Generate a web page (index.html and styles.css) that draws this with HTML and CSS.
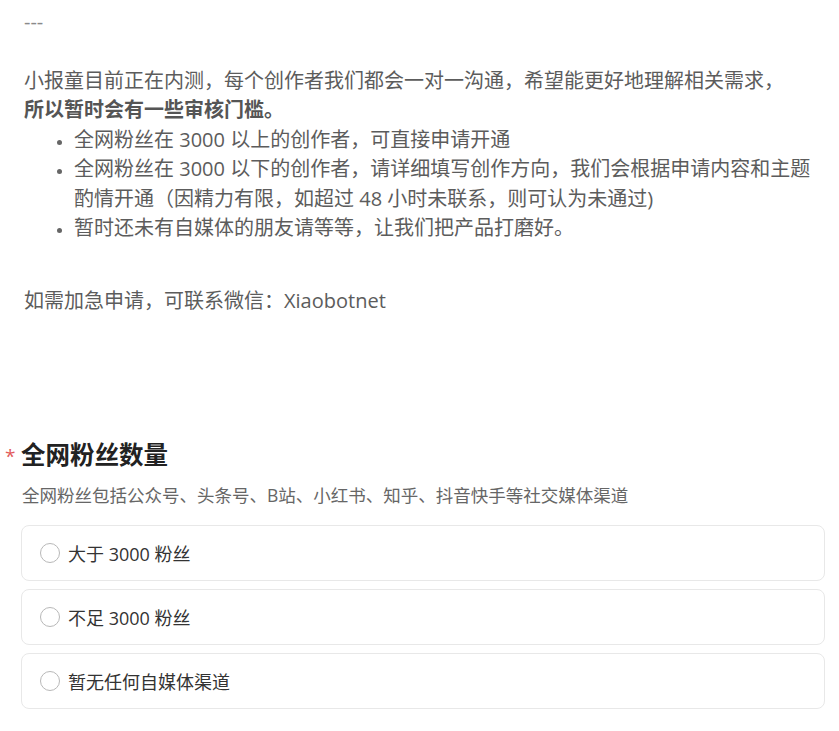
FILE: index.html
```html
<!DOCTYPE html>
<html lang="zh-CN">
<head>
<meta charset="utf-8">
<title>申请</title>
<link rel="stylesheet" href="styles.css">
</head>
<body>
<div class="page">
  <section class="intro">
    <p class="dash">---</p>
    <p class="lead">小报童目前正在内测，每个创作者我们都会一对一沟通，希望能更好地理解相关需求，<br><strong>所以暂时会有一些审核门槛。</strong></p>
    <ul class="rules">
      <li>全网粉丝在 3000 以上的创作者，可直接申请开通</li>
      <li>全网粉丝在 3000 以下的创作者，请详细填写创作方向，我们会根据申请内容和主题酌情开通（因精力有限，如超过 48 小时未联系，则可认为未通过)</li>
      <li>暂时还未有自媒体的朋友请等等，让我们把产品打磨好。</li>
    </ul>
    <p class="contact">如需加急申请，可联系微信：Xiaobotnet</p>
  </section>

  <section class="question">
    <h2 class="q-title"><span class="req">*</span>全网粉丝数量</h2>
    <p class="q-desc">全网粉丝包括公众号、头条号、B站、小红书、知乎、抖音快手等社交媒体渠道</p>
    <div class="options">
      <label class="option"><span class="radio"></span><span class="opt-text">大于 3000 粉丝</span></label>
      <label class="option"><span class="radio"></span><span class="opt-text">不足 3000 粉丝</span></label>
      <label class="option"><span class="radio"></span><span class="opt-text">暂无任何自媒体渠道</span></label>
    </div>
  </section>
</div>
</body>
</html>
```

FILE: styles.css
```css
html, body {
  margin: 0;
  padding: 0;
  background: #ffffff;
}

body {
  font-family: "Open Sans", "Noto Sans CJK SC", sans-serif;
  color: #5c5c5c;
}

.page {
  padding: 7px 13px 0 0;
}

.intro {
  padding-left: 24px;
  font-size: 20px;
  line-height: 29.5px;
}

.intro p {
  margin: 0;
}

.dash {
  color: #8a8a8a;
  margin-bottom: 29px !important;
}

.lead strong {
  font-weight: 700;
  color: #555555;
}

.rules {
  margin: 0;
  padding-left: 50px;
}

.rules li::marker {
  font-size: 15px;
  color: #666666;
}

.contact {
  margin-top: 43px !important;
}

.question {
  margin-top: 123px;
  padding-left: 21px;
}

.q-title {
  margin: 0;
  font-size: 24.5px;
  line-height: 34px;
  font-weight: 700;
  color: #222222;
  position: relative;
}

.req {
  position: absolute;
  left: -16px;
  top: 1px;
  color: #e25b5b;
  font-size: 19px;
  font-weight: 400;
}

.q-desc {
  margin: 10px 0 0 1px;
  font-size: 17.5px;
  line-height: 26px;
  color: #666666;
}

.options {
  margin-top: 17px;
  display: flex;
  flex-direction: column;
  gap: 8px;
  width: 804px;
}

.option {
  display: flex;
  align-items: center;
  gap: 8px;
  height: 56px;
  box-sizing: border-box;
  padding-left: 18px;
  border: 1px solid #e8e8e8;
  border-radius: 8px;
  background: #fff;
}

.radio {
  width: 20px;
  height: 20px;
  box-sizing: border-box;
  border: 1px solid #b8b8b8;
  border-radius: 50%;
  flex: none;
}

.opt-text {
  font-size: 18px;
  color: #333333;
}
```
